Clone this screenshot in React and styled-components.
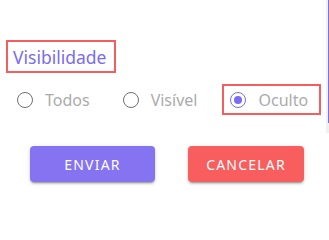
import styled, { createGlobalStyle } from "styled-components";

const GlobalStyle = createGlobalStyle`
    html, body {
        margin: 0;
        padding: 0;
        background: #ffffff;
        font-family: "Noto Sans", "Open Sans", Arial, sans-serif;
    }
`;

const Page = styled.div`
    width: 329px;
    height: 226px;
    display: flex;
    flex-direction: column;
    overflow: hidden;
`;

const Top = styled.div`
    display: flex;
    height: 133px;
`;

const Content = styled.div`
    flex: 1;
    padding: 40px 0 0 6px;
    display: flex;
    flex-direction: column;
    align-items: flex-start;
`;

const Track = styled.div`
    width: 3px;
    background: #f1f1f1;
    display: flex;
    justify-content: flex-end;
`;

const Thumb = styled.div`
    width: 1px;
    height: 123px;
    background: #7d6cf0;
`;

const Title = styled.div`
    box-sizing: border-box;
    height: 33px;
    padding: 0 8px 0 5px;
    border: 2px solid #f55d5f;
    display: flex;
    align-items: center;
    font-size: 17.5px;
    color: #7a6bf0;
`;

const RadioRow = styled.div`
    display: flex;
    margin-top: 11px;
    margin-left: 3px;
    gap: 12px;
`;

const Option = styled.label`
    box-sizing: border-box;
    height: 31px;
    padding: 0 11px 0 6px;
    display: flex;
    align-items: center;
    gap: 12px;
    border: 2px solid ${(p) => (p.$highlight ? "#f55d5f" : "transparent")};
    font-size: 16px;
    color: #ababab;
`;

const Circle = styled.span`
    box-sizing: border-box;
    width: 16px;
    height: 16px;
    border-radius: 50%;
    border: 1.8px solid ${(p) => (p.$checked ? "#7b6cf0" : "#707070")};
    display: flex;
    align-items: center;
    justify-content: center;

    &::after {
        content: "";
        width: 8px;
        height: 8px;
        border-radius: 50%;
        background: ${(p) => (p.$checked ? "#7b6cf0" : "transparent")};
    }
`;

const ButtonRow = styled.div`
    display: flex;
    gap: 33px;
    margin: 13px 0 0 30px;
`;

const Button = styled.button`
    box-sizing: border-box;
    width: ${(p) => p.$width}px;
    height: 36px;
    border: none;
    border-radius: 4px;
    background: ${(p) => p.$color};
    color: #ffffff;
    font-family: "Noto Sans", "Open Sans", Arial, sans-serif;
    font-size: 14px;
    letter-spacing: 1.2px;
    text-transform: uppercase;
    box-shadow: 0 3px 1px -2px rgba(0, 0, 0, 0.2), 0 2px 2px 0 rgba(0, 0, 0, 0.14), 0 1px 5px 0 rgba(0, 0, 0, 0.12);
    cursor: pointer;
`;

const OPTIONS = [
    { value: "todos", name: "Todos" },
    { value: "visivel", name: "Visível" },
    { value: "oculto", name: "Oculto" }
];

function App() {
    const selected = "oculto";

    return (
        <Page>
            <GlobalStyle />
            <Top>
                <Content>
                    <Title>Visibilidade</Title>
                    <RadioRow>
                        {OPTIONS.map((option) => (
                            <Option key={option.value} $highlight={option.value === selected}>
                                <Circle $checked={option.value === selected} />
                                {option.name}
                            </Option>
                        ))}
                    </RadioRow>
                </Content>
                <Track>
                    <Thumb />
                </Track>
            </Top>
            <ButtonRow>
                <Button $color="#8573f1" $width={125}>Enviar</Button>
                <Button $color="#f85e5e" $width={116}>Cancelar</Button>
            </ButtonRow>
        </Page>
    );
}

export default App;
